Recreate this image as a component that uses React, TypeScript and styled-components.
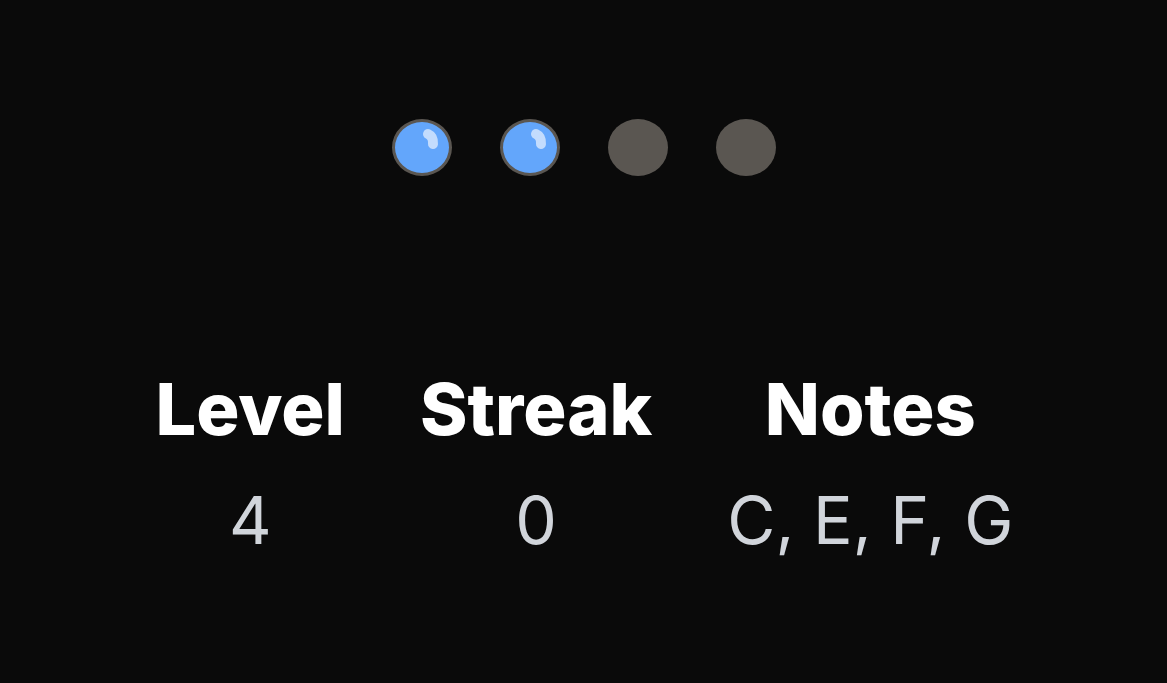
import React from "react";
import styled, { createGlobalStyle } from "styled-components";

const Global = createGlobalStyle`
  html, body { margin: 0; padding: 0; background: #0a0a0a; }
  body { font-family: Inter, "Liberation Sans", sans-serif; }
`;

const Page = styled.div`
  width: 100%;
  height: 683px;
  background: #0a0a0a;
  display: flex;
  flex-direction: column;
  align-items: center;
  padding-top: 119px;
  box-sizing: border-box;
`;

const DotRow = styled.div`
  display: flex;
  gap: 48px;
  margin-left: 1px;
`;

const Dot = styled.div<{ $on: boolean }>`
  position: relative;
  width: 60px;
  height: 57px;
  border-radius: 50%;
  box-sizing: border-box;
  background: ${(p) => (p.$on ? "#63a6fb" : "#5a5651")};
  border: ${(p) => (p.$on ? "3px solid #5a5651" : "none")};
`;

const Shine = styled.svg`
  position: absolute;
  left: -3px;
  top: -3px;
  width: 60px;
  height: 57px;
  overflow: visible;
`;

const ShinePath = styled.path`
  fill: none;
  stroke: #c3dcfd;
  stroke-width: 10px;
  stroke-linecap: round;
`;

const Stats = styled.div`
  margin-top: 197px;
  display: flex;
  gap: 75px;
  margin-left: 2px;
`;

const Stat = styled.div`
  display: flex;
  flex-direction: column;
  align-items: center;
  gap: 42px;
`;

const Label = styled.div`
  font-family: Inter, "Liberation Sans", sans-serif;
  font-weight: 800;
  font-size: 72px;
  line-height: 1;
  color: #ffffff;
`;

const Value = styled.div`
  font-family: Inter, "Liberation Sans", sans-serif;
  font-weight: 400;
  font-size: 66px;
  line-height: 1;
  color: #d1d5db;
`;

const dots = [true, true, false, false];
const stats = [
  { label: "Level", value: "4" },
  { label: "Streak", value: "0" },
  { label: "Notes", value: "C, E, F, G" },
];

export default function App() {
  return (
    <>
      <Global />
      <Page>
        <DotRow>
          {dots.map((on, i) => (
            <Dot key={i} $on={on}>
              {on && (
                <Shine viewBox="0 0 60 57">
                  <ShinePath d="M36 15 Q41.5 17.5 41 25" />
                </Shine>
              )}
            </Dot>
          ))}
        </DotRow>
        <Stats>
          {stats.map((s) => (
            <Stat key={s.label}>
              <Label>{s.label}</Label>
              <Value>{s.value}</Value>
            </Stat>
          ))}
        </Stats>
      </Page>
    </>
  );
}
